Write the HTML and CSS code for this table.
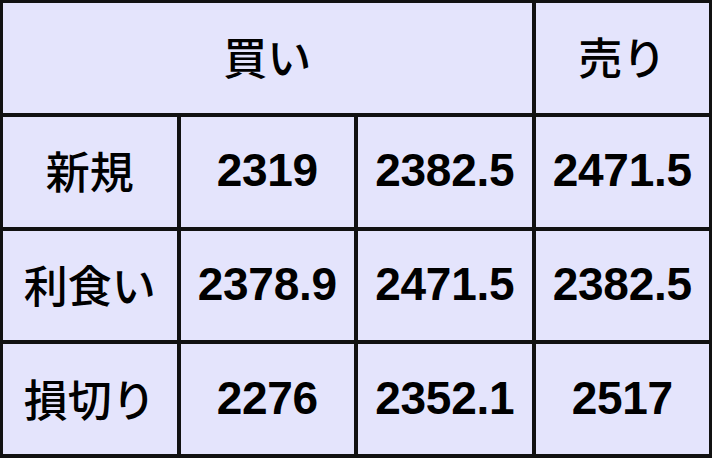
FILE: index.html
```html
<!DOCTYPE html>
<html lang="ja">
<head>
<meta charset="utf-8">
<link rel="stylesheet" href="styles.css">
</head>
<body>
<div class="sheet">
  <div class="cell head span3 jp">買い</div>
  <div class="cell head jp">売り</div>
  <div class="cell jp">新規</div>
  <div class="cell num">2319</div>
  <div class="cell num">2382.5</div>
  <div class="cell num">2471.5</div>
  <div class="cell jp">利食い</div>
  <div class="cell num">2378.9</div>
  <div class="cell num">2471.5</div>
  <div class="cell num">2382.5</div>
  <div class="cell jp">損切り</div>
  <div class="cell num">2276</div>
  <div class="cell num">2352.1</div>
  <div class="cell num">2517</div>
</div>
</body>
</html>
```

FILE: styles.css
```css
html, body {
  margin: 0;
  padding: 0;
  background: #ffffff;
}

.sheet {
  width: 712px;
  height: 458px;
  box-sizing: border-box;
  display: grid;
  grid-template-columns: repeat(4, 1fr);
  grid-template-rows: repeat(4, 1fr);
  gap: 4px;
  padding: 3px 3px 4px 3px;
  background: #111111;
}

.cell {
  background: #e4e4fc;
  display: flex;
  align-items: center;
  justify-content: center;
  color: #000000;
  font-size: 46px;
  white-space: nowrap;
  padding-bottom: 3px;
}

.span3 {
  grid-column: span 3;
}

.num {
  font-family: "Liberation Sans", Arial, sans-serif;
  font-weight: bold;
  letter-spacing: -0.3px;
}

.jp {
  font-family: "Noto Sans CJK JP", "Liberation Sans", sans-serif;
  font-weight: 500;
  font-size: 44px;
}
```
